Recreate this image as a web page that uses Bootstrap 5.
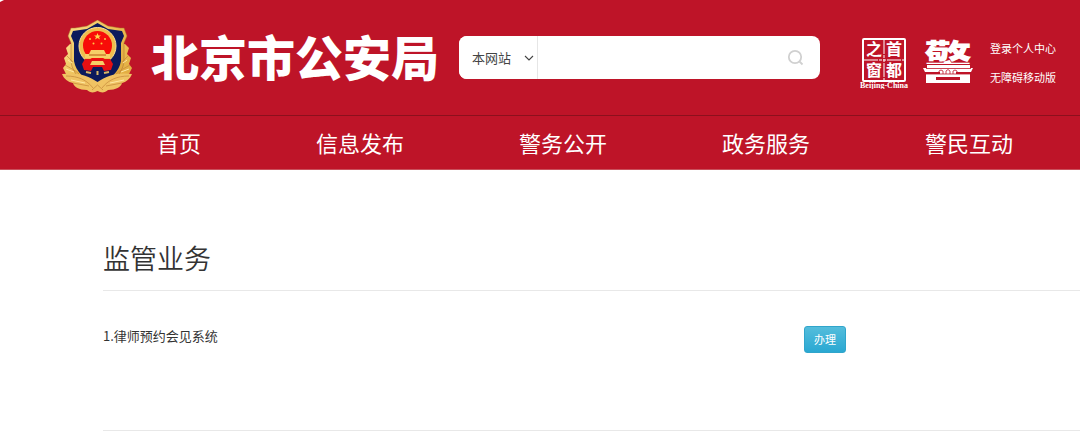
<!DOCTYPE html>
<html lang="zh-CN">
<head>
<meta charset="utf-8">
<meta name="viewport" content="width=device-width, initial-scale=1">
<title>北京市公安局</title>
<link href="https://cdn.jsdelivr.net/npm/bootstrap@5.3.0/dist/css/bootstrap.min.css" rel="stylesheet">
<style>
  :root { --police-red: #be1428; }
  body { font-family: "Noto Sans CJK SC", sans-serif; color: #333; font-size: 13px; line-height: 20px; overflow-x: hidden; }
  .site-head { background: var(--police-red); color: #fff; border-bottom: 1px solid #c9505c; }
  .site-head a { color: #fff; text-decoration: none; white-space: nowrap; }
  .corner-notch { position: absolute; left: 0; top: 0; }
  .head-bar { height: 115px; padding: 0 24px 0 62px; }
  .site-name { font-size: 48px; line-height: 64px; font-weight: 900; margin: 0 20px 6px 18px; white-space: nowrap; }
  .search-box { height: 43px; border-radius: 8px; background: #fff; min-width: 200px; overflow: hidden; }
  .search-box .form-select {
    width: 79px; padding: 0 24px 0 13px; border: 0; border-right: 1px solid #e6e6e6; border-radius: 0;
    font-size: 13px; color: #444; background-color: #fff;
    background-image: url("data:image/svg+xml,%3Csvg xmlns='http://www.w3.org/2000/svg' viewBox='0 0 10 6'%3E%3Cpath d='M1 1l4 4 4-4' fill='none' stroke='%23444' stroke-width='1.1'/%3E%3C/svg%3E");
    background-size: 10px 6px; background-position: right 3px center;
  }
  .search-box .form-control { border: 0; border-radius: 0; background: #fff; font-size: 13px; }
  .search-box .btn { padding: 0 16px; border: 0; line-height: 0; }
  .head-links { font-size: 11px; line-height: 17px; gap: 12px; margin: 10px 0 0 16px; }
  .main-nav { border-top: 1px solid #8c101d; height: 54px; padding: 0 0 2px 157px; gap: 115px; font-size: 22px; line-height: 32px; }
  .section-body { padding: 68px 0 0 103px; }
  .section-title { font-size: 27px; line-height: 40px; font-weight: 350; padding-bottom: 12px; }
  .ruled { border-bottom: 1px solid #e8e8e8; }
  .service-item { padding: 35px 0 77px; }
  .service-name { flex: 0 1 701px; }
  .btn-handle {
    --bs-btn-color: #fff; --bs-btn-hover-color: #fff; --bs-btn-border-color: #30a5cb; --bs-btn-border-radius: 3px;
    --bs-btn-padding-x: 9px; --bs-btn-padding-y: 4px; --bs-btn-font-size: 11px;
    line-height: 17px; background: linear-gradient(#54bddc, #2aa8d2);
  }
</style>
</head>
<body>
<header class="site-head">
  <svg class="corner-notch" width="4" height="2" aria-hidden="true"><path d="M0 0H4L2 1L0 2Z" fill="#fff"/></svg>
  <div class="head-bar d-flex align-items-center">
    <svg class="flex-shrink-0" width="71" height="75" viewBox="0 0 71 75" role="img" aria-label="警徽">
      <defs>
        <linearGradient id="gold" x1="0" y1="0" x2="1" y2="1">
          <stop offset="0" stop-color="#fbe08a"/><stop offset=".5" stop-color="#ebbc50"/><stop offset="1" stop-color="#dca338"/>
        </linearGradient>
      </defs>
      <path d="M8 24L4 28L6 34L2 38L4 44L1 48L4 54C10 60 22 64 35.500 70C49 64 61 60 67 54L70 48L67 44L69 38L65 34L67 28L63 24Z" fill="url(#gold)"/>
      <path d="M35.500 0L46 6L58 8L62 8L65 16L62 23V42C60 54 52 62 35.500 68C19 62 11 54 9 42V23L6 16L9 8L13 8L25 6Z" fill="url(#gold)" stroke="#a96a2b" stroke-width=".5"/>
      <path d="M35.500 3L46 9L60 11L62 16L59 23V41C57 52 49 59 35.500 65C22 59 14 52 12 41V23L9 16L11 11L25 9Z" fill="#0b1a5c"/>
      <circle cx="35.500" cy="26" r="18.500" fill="#f0bd4d" stroke="#ffe494" stroke-width="1"/>
      <circle cx="35.500" cy="25.500" r="14.500" fill="#f80c08"/>
      <path d="M23 39H48L51 44L49 50L42 51L40 47H31L29 51L22 50L20 44Z" fill="#e51013"/>
      <path d="M29 30H42L44 34H48V38H23V34H27ZM30 41H41L43 45H28Z" fill="#f6cf67"/>
      <path d="M27 35H44" stroke="#b85b16"/>
      <path d="M35.500 13L36.500 15.500H39L37 17L38 19.500L35.500 18L33 19.500L34 17L32 15.500H34.500Z" fill="#ffd34c"/>
      <g fill="#ffc744"><circle cx="28" cy="19" r="1"/><circle cx="43" cy="19" r="1"/><circle cx="31.500" cy="23.500" r="1"/><circle cx="39.500" cy="23.500" r="1"/></g>
      <path d="M24 52L29 53M35.500 51V55M42 53L47 52" stroke="#d9b866" stroke-width="2"/>
      <path d="M0 54C14 52 26 55 35.500 62C45 55 57 52 70 54C68 59 64 62 60 63C59 67 54 70 46 70C43 73 39 73 35.500 71C32 73 28 73 25 70C17 70 12 67 11 63C6 62 2 59 0 54Z" fill="#f0c363"/>
      <path d="M3 45C8 48 13 50 17 54M68 45C63 48 58 50 54 54M4 56C16 56 25 60 31 68M67 56C55 56 46 60 40 68M5 36L11 42M66 36L60 42M11 63L27 66M60 63L44 66M30 70L35.500 65L41 70" fill="none" stroke="#c4873a" stroke-width=".7"/>
      <path d="M4 49L12 52M67 49L59 52M9 60L23 63M62 60L48 63M6 40L10 43M65 40L61 43" stroke="#ffe9a3" stroke-width="1"/>
    </svg>
    <h1 class="site-name">北京市公安局</h1>
    <form class="search-box d-flex flex-grow-1" role="search">
      <select class="form-select flex-shrink-0" aria-label="搜索范围"><option>本网站</option></select>
      <input class="form-control shadow-none" type="search" aria-label="搜索">
      <button class="btn" type="button" aria-label="搜索">
        <svg width="18" height="18" viewBox="0 0 18 18" fill="none" stroke="#d0d0d0" stroke-width="1.8"><circle cx="9" cy="8" r="6.200"/><path d="M13.500 12.500L16.500 15.500"/></svg>
      </button>
    </form>
    <a class="ms-4 ps-3 mt-2 flex-shrink-0" href="#" aria-label="首都之窗">
      <svg class="d-block" width="50" height="54" viewBox="0 0 50 54">
        <rect x="3" y="4" width="42" height="42" rx="1" fill="none" stroke="#fff" stroke-width="2"/>
        <path d="M24 5V45M4 25H45" stroke="#fff" stroke-width="1" stroke-dasharray="14 1 3 1 3 1"/>
        <g fill="#fff" font-family="Noto Sans CJK SC, sans-serif" font-weight="700" font-size="16">
          <text x="6" y="20">之</text><text x="26" y="20">首</text><text x="6" y="41">窗</text><text x="26" y="41">都</text>
        </g>
        <text x="0" y="53" fill="#fff" font-family="Liberation Serif, serif" font-weight="700" font-size="8">Beijing-China</text>
      </svg>
    </a>
    <a class="ms-2 ps-1 mt-2 flex-shrink-0" href="#" aria-label="警">
      <svg class="d-block" width="52" height="50" viewBox="0 0 52 50">
        <text x="2" y="44" fill="#fff" font-family="Noto Sans CJK SC, sans-serif" font-weight="900" font-size="48">警</text>
        <path d="M0 27H52V50H0Z" fill="#be1428"/>
        <path d="M5 28H48V31H51L49 35H3L1 31H5ZM4 37H18V35H34V37H48V46H4Z" fill="#fff"/>
        <path d="M4 31.500H49M17 37V34Q19 32 21 34V37M24 37V34Q26 31 28 34V37M31 37V34Q33 32 35 34V37M3 37H49" fill="none" stroke="#be1428" stroke-width=".8"/>
        <path d="M14 40H38V43H14Z" fill="#be1428"/>
      </svg>
    </a>
    <div class="head-links d-flex flex-column">
      <a href="#">登录个人中心</a>
      <a href="#">无障碍移动版</a>
    </div>
  </div>
  <nav class="main-nav d-flex align-items-center">
    <a href="#">首页</a>
    <a href="#">信息发布</a>
    <a href="#">警务公开</a>
    <a href="#">政务服务</a>
    <a href="#">警民互动</a>
  </nav>
</header>
<main class="section-body">
  <h2 class="section-title ruled m-0">监管业务</h2>
  <div class="service-item ruled d-flex align-items-start">
    <div class="service-name">1.律师预约会见系统</div>
    <button type="button" class="btn btn-handle">办理</button>
  </div>
</main>
<script src="https://cdn.jsdelivr.net/npm/bootstrap@5.3.0/dist/js/bootstrap.bundle.min.js"></script>
</body>
</html>
